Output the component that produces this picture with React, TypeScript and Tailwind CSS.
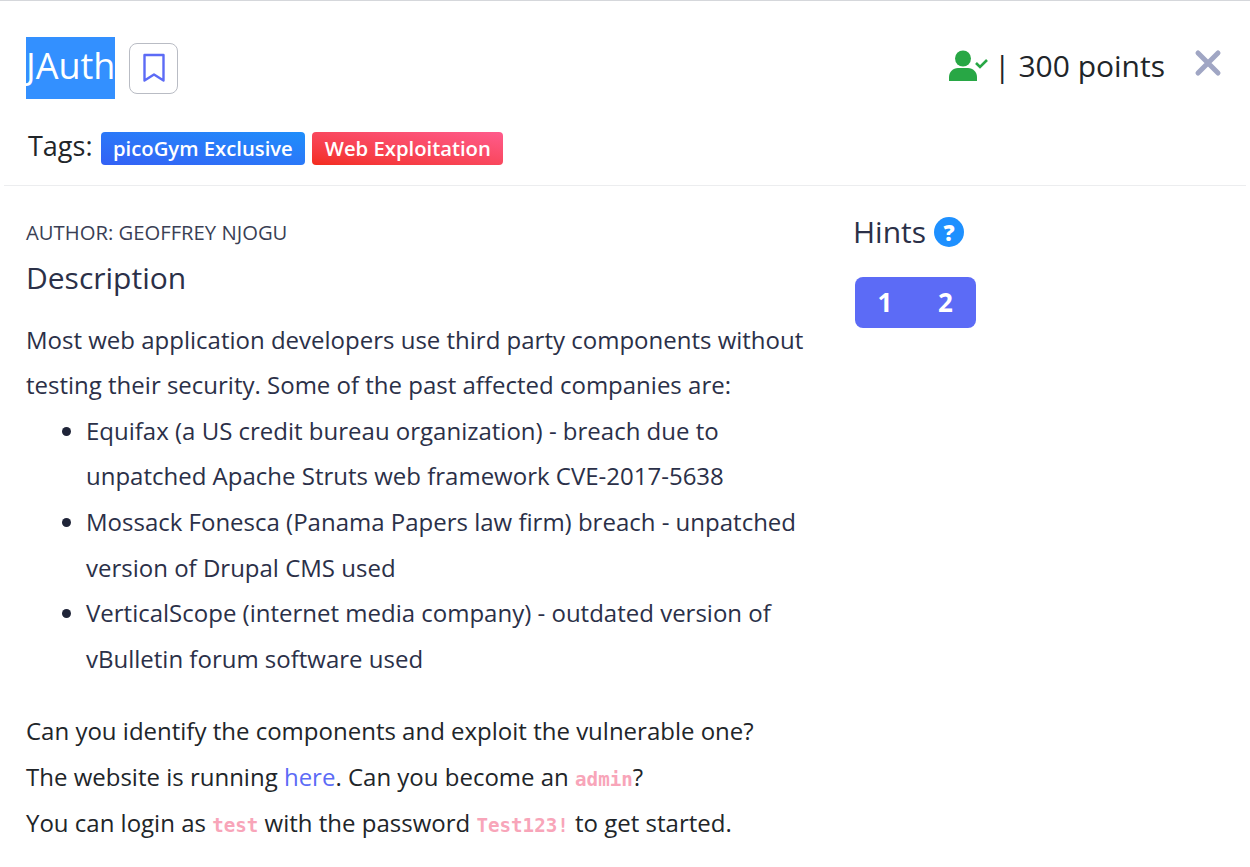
import React from "react";

const BookmarkIcon = () => (
  <svg width="24" height="30" viewBox="0 0 24 30" fill="none" stroke="#5c6bf6" strokeWidth="2.4" strokeLinejoin="round" strokeLinecap="round">
    <path d="M2.5 2h19v25.5l-9.5-6-9.5 6z" />
  </svg>
);

const UserCheck = () => (
  <svg className="mb-[4px]" width="40" height="32" viewBox="0 0 40 32" fill="#28a745">
    <circle cx="14" cy="8.5" r="8" />
    <path d="M0 31v-4c0-5 4-9 9-9h10c5 0 9 4 9 9v4z" />
    <path d="M27 13l4 4 7-7" fill="none" stroke="#28a745" strokeWidth="2.6" />
  </svg>
);

const Code = ({ children }: { children: React.ReactNode }) => (
  <code className="font-['DejaVu_Sans_Mono',monospace] text-[19.2px] font-bold leading-none text-[#f8a5b9]">{children}</code>
);

export default function App() {
  return (
    <div className="h-[867px] w-[1250px] overflow-hidden border-t border-[#d5d7db] bg-white font-['Open_Sans',sans-serif] text-[24px] leading-[45.6px] text-[#212529]">
      <header className="mx-1 border-b border-[#ecedef] pb-[19px]">
        <div className="flex items-center justify-between pl-[22px] pr-[24px] pt-[36px]">
          <div className="flex items-center">
            <h1 className="bg-[#3390ff] pb-[4px] text-[36px] leading-[58px] text-white">JAuth</h1>
            <button className="ml-[14px] flex h-[51px] w-[49px] items-center justify-center rounded-lg border border-[#b9bcc4] bg-white">
              <BookmarkIcon />
            </button>
          </div>
          <div className="flex items-center">
            <UserCheck />
            <span className="mb-[4px] ml-[5px] text-[30px] leading-[58px] text-[#212529]">| 300 points</span>
            <svg className="mb-[10px] ml-[29px]" width="28" height="28" viewBox="0 0 28 28" stroke="#a0a6c4" strokeWidth="5" strokeLinecap="round">
              <path d="M4 4l20 20M24 4L4 24" />
            </svg>
          </div>
        </div>
        <div className="mt-[31px] flex items-center pl-[24px]">
          <span className="mb-[4px] text-[27px] leading-[32px]">Tags:</span>
          <span className="ml-[8px] rounded-[4px] bg-gradient-to-tr from-[#3360f5] to-[#1e8efb] px-[12.5px] text-[20.25px] font-semibold leading-[33px] text-white">picoGym Exclusive</span>
          <span className="ml-[7px] rounded-[4px] bg-gradient-to-tr from-[#f32b1b] to-[#ff5b8c] px-[12.5px] text-[20.25px] font-semibold leading-[33px] text-white">Web Exploitation</span>
        </div>
      </header>
      <main className="flex pl-[26px] pt-[31px]">
        <section className="w-[828px] shrink-0 pt-px">
          <p className="text-[20.25px] uppercase leading-[29px] text-[#3a3f55]">Author: Geoffrey Njogu</p>
          <h2 className="mt-[10px] text-[30px] leading-[42px] text-[#2b3048]">Description</h2>
          <div className="mt-[17.7px] text-[#2b3048]">
            <p>Most web application developers use third party components without<br />testing their security. Some of the past affected companies are:</p>
            <ul className="mb-[27px] list-disc pl-[60px] marker:text-[#1f2438]">
              <li>Equifax (a US credit bureau organization) - breach due to<br />unpatched Apache Struts web framework CVE-2017-5638</li>
              <li>Mossack Fonesca (Panama Papers law firm) breach - unpatched<br />version of Drupal CMS used</li>
              <li>VerticalScope (internet media company) - outdated version of<br />vBulletin forum software used</li>
            </ul>
            <p className="text-[#212529]">Can you identify the components and exploit the vulnerable one?</p>
            <p className="text-[#212529]">The website is running <a className="text-[#5c6bf6]">here</a>. Can you become an <Code>admin</Code>?</p>
            <p className="text-[#212529]">You can login as <Code>test</Code> with the password <Code>Test123!</Code> to get started.</p>
          </div>
        </section>
        <aside className="-ml-px">
          <div className="flex items-center">
            <span className="text-[30px] leading-[30px] text-[#2b3048]">Hints</span>
            <span className="ml-[8px] flex h-[30px] w-[30px] items-center justify-center rounded-full bg-[#1e90ff] text-[22px] font-extrabold leading-none text-white">?</span>
          </div>
          <div className="ml-[2px] mt-[30px] flex h-[51px] w-[121px] items-center rounded-lg bg-[#5c6bf6] text-[26px] font-bold text-white">
            <span className="w-[60px] text-center">1</span>
            <span className="w-[61px] text-center">2</span>
          </div>
        </aside>
      </main>
    </div>
  );
}
